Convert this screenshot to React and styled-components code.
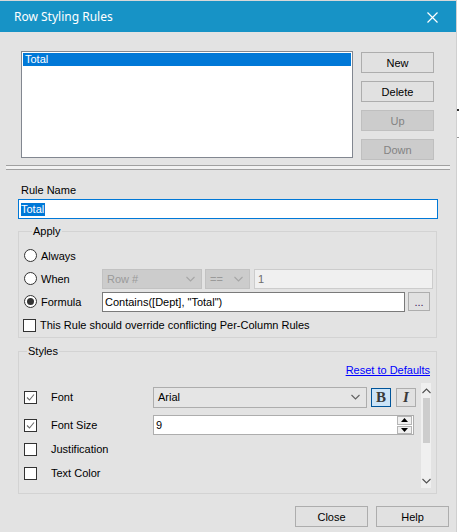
import styled, { createGlobalStyle } from "styled-components";

const GlobalStyle = createGlobalStyle`
  html, body {
    margin: 0;
    padding: 0;
    background: #ffffff;
  }
  body {
    font-family: "Liberation Sans", Arial, sans-serif;
    font-size: 11px;
    color: #000;
  }
`;

const Chevron = ({ color = "#7a7a7a", up = false }) => (
  <svg width="9" height="6" viewBox="0 0 9 6">
    <polyline
      points={up ? "0.5,5 4.5,1 8.5,5" : "0.5,1 4.5,5 8.5,1"}
      fill="none"
      stroke={color}
      strokeWidth="1.1"
    />
  </svg>
);

const CheckBox = ({ checked }) => (
  <Box>
    {checked && (
      <svg width="11" height="11" viewBox="0 0 11 11">
        <polyline points="2,5.5 4.5,8 9,2.5" fill="none" stroke="#6b6b6b" strokeWidth="1.1" />
      </svg>
    )}
  </Box>
);

const App = () => {
  return (
    <>
      <GlobalStyle />
      <Screen>
        <Dialog>
          <TitleBar>
            <Title>Row Styling Rules</Title>
            <CloseX>
              <svg width="11" height="11" viewBox="0 0 11 11">
                <path d="M0.5 0.5 L10.5 10.5 M10.5 0.5 L0.5 10.5" stroke="#fff" strokeWidth="1.2" />
              </svg>
            </CloseX>
          </TitleBar>

          <Body>
            <TopSection>
              <ListBox>
                <ListItem>Total</ListItem>
              </ListBox>
              <ButtonColumn>
                <Button>New</Button>
                <Button>Delete</Button>
                <Button disabled>Up</Button>
                <Button disabled>Down</Button>
              </ButtonColumn>
            </TopSection>

            <Separator />

            <Form>
              <FieldLabel>Rule Name</FieldLabel>
              <NameBox>
                <Highlight>Total</Highlight>
              </NameBox>

              <Group>
                <Legend>Apply</Legend>
                <ApplyRow>
                  <OptionLabel>
                    <Radio />
                    Always
                  </OptionLabel>
                </ApplyRow>
                <ApplyRow>
                  <OptionLabel>
                    <Radio />
                    When
                  </OptionLabel>
                  <Combo width={100} disabled>
                    Row #
                    <Chevron color="#a6a6a6" />
                  </Combo>
                  <Combo width={45} disabled>
                    ==
                    <Chevron color="#a6a6a6" />
                  </Combo>
                  <ValueBox>1</ValueBox>
                </ApplyRow>
                <ApplyRow>
                  <OptionLabel>
                    <Radio checked />
                    Formula
                  </OptionLabel>
                  <FormulaBox>Contains([Dept], "Total")</FormulaBox>
                  <DotsButton>...</DotsButton>
                </ApplyRow>
                <OverrideRow>
                  <CheckBox />
                  This Rule should override conflicting Per-Column Rules
                </OverrideRow>
              </Group>

              <StylesGroup>
                <Legend>Styles</Legend>
                <ResetRow>
                  <ResetLink>Reset to Defaults</ResetLink>
                </ResetRow>
                <ScrollPanel>
                  <StyleRows>
                    <StyleRow first>
                      <CheckBox checked />
                      <StyleName>Font</StyleName>
                      <Combo width={214} height={21}>
                        Arial
                        <Chevron color="#606060" />
                      </Combo>
                      <ToggleButton active>B</ToggleButton>
                      <ToggleButton italic>I</ToggleButton>
                    </StyleRow>
                    <StyleRow>
                      <CheckBox checked />
                      <StyleName>Font Size</StyleName>
                      <SizeBox>
                        9
                        <Spinner>
                          <SpinHalf>
                            <svg width="7" height="4" viewBox="0 0 7 4">
                              <polygon points="0,4 3.5,0 7,4" fill="#000" />
                            </svg>
                          </SpinHalf>
                          <SpinHalf>
                            <svg width="7" height="4" viewBox="0 0 7 4">
                              <polygon points="0,0 3.5,4 7,0" fill="#000" />
                            </svg>
                          </SpinHalf>
                        </Spinner>
                      </SizeBox>
                    </StyleRow>
                    <StyleRow>
                      <CheckBox />
                      <StyleName>Justification</StyleName>
                    </StyleRow>
                    <StyleRow>
                      <CheckBox />
                      <StyleName>Text Color</StyleName>
                    </StyleRow>
                  </StyleRows>
                  <ScrollBar>
                    <ScrollArrow>
                      <Chevron color="#505050" up />
                    </ScrollArrow>
                    <Track>
                      <Thumb />
                    </Track>
                    <ScrollArrow>
                      <Chevron color="#505050" />
                    </ScrollArrow>
                  </ScrollBar>
                </ScrollPanel>
              </StylesGroup>
            </Form>

            <Footer>
              <Button>Close</Button>
              <Button>Help</Button>
            </Footer>
          </Body>
        </Dialog>
        <Strip>
          <Tick />
          <StripLine />
        </Strip>
      </Screen>
    </>
  );
};

export default App;

const Screen = styled.div`
  display: flex;
  width: 459px;
  height: 532px;
  overflow: hidden;
`;

const Dialog = styled.div`
  width: 456px;
  height: 532px;
  background: #e3e3e3;
  display: flex;
  flex-direction: column;
  border-top: 1px solid #d8d8d8;
  box-sizing: border-box;
`;

const Strip = styled.div`
  width: 3px;
  background: #ffffff;
  border-left: 1px solid #d0d0d0;
  box-sizing: border-box;
  display: flex;
  flex-direction: column;
  padding-top: 109px;
`;

const Tick = styled.div`
  width: 2px;
  height: 2px;
  background: #333;
`;

const StripLine = styled.div`
  margin-top: 26px;
  height: 1px;
  background: #9a9a9a;
`;

const TitleBar = styled.div`
  height: 31px;
  background: #1793c6;
  display: flex;
  align-items: center;
  justify-content: space-between;
  padding: 0 18px 0 14px;
  flex-shrink: 0;
`;

const Title = styled.div`
  font-family: "Noto Sans", "Open Sans", sans-serif;
  font-size: 12px;
  color: #ffffff;
  margin-top: -1px;
`;

const CloseX = styled.div`
  display: flex;
  margin-top: 1px;
`;

const Body = styled.div`
  display: flex;
  flex-direction: column;
`;

const TopSection = styled.div`
  display: flex;
  padding: 19px 0 0 21px;
  height: 109px;
`;

const ListBox = styled.div`
  width: 332px;
  height: 107px;
  box-sizing: border-box;
  background: #ffffff;
  border: 1px solid #828790;
  padding: 1px;
`;

const ListItem = styled.div`
  height: 13px;
  line-height: 13px;
  background: #0078d7;
  color: #ffffff;
  padding-left: 2px;
`;

const ButtonColumn = styled.div`
  display: flex;
  flex-direction: column;
  gap: 8px;
  margin: 1px 0 0 8px;
`;

const Button = styled.div`
  width: 73px;
  height: 21px;
  box-sizing: border-box;
  display: flex;
  align-items: center;
  justify-content: center;
  background: ${(props) => (props.disabled ? "#cccccc" : "#e1e1e1")};
  border: 1px solid ${(props) => (props.disabled ? "#bfbfbf" : "#adadad")};
  color: ${(props) => (props.disabled ? "#838383" : "#000000")};
`;

const Separator = styled.div`
  margin: 5px 6px 0 6px;
  height: 3px;
  border-top: 1px solid #a0a0a0;
  border-bottom: 1px solid #a0a0a0;
  background: #f2f2f2;
`;

const Form = styled.div`
  display: flex;
  flex-direction: column;
  padding-left: 18px;
  width: 420px;
`;

const FieldLabel = styled.div`
  margin: 14px 0 0 3px;
  height: 15px;
  line-height: 13px;
`;

const NameBox = styled.div`
  height: 20px;
  box-sizing: border-box;
  border: 1px solid #0078d7;
  background: #ffffff;
  display: flex;
  align-items: center;
  padding-left: 2px;
`;

const Highlight = styled.span`
  background: #0078d7;
  color: #ffffff;
  line-height: 13px;
  padding-right: 1px;
`;

const Group = styled.fieldset`
  margin: 6px 0 0 0;
  width: 419px;
  box-sizing: border-box;
  border: 1px solid #d3d3d3;
  padding: 6px 0 0 5px;
  min-width: 0;
`;

const StylesGroup = styled(Group)`
  margin-top: 7px;
  padding: 0 0 5px 0;
`;

const Legend = styled.legend`
  margin-left: 8px;
  padding: 0 1px;
  line-height: 13px;
  font-size: 11px;
`;

const ApplyRow = styled.div`
  height: 23px;
  display: flex;
  align-items: center;
`;

const OptionLabel = styled.div`
  width: 78px;
  display: flex;
  align-items: center;
  gap: 4px;
`;

const Radio = styled.div`
  width: 13px;
  height: 13px;
  box-sizing: border-box;
  border: 1px solid #333333;
  border-radius: 50%;
  background: #ffffff;
  display: flex;
  align-items: center;
  justify-content: center;

  &::after {
    content: "";
    display: ${(props) => (props.checked ? "block" : "none")};
    width: 7px;
    height: 7px;
    border-radius: 50%;
    background: #333333;
  }
`;

const Combo = styled.div`
  width: ${(props) => props.width}px;
  height: ${(props) => props.height || 20}px;
  box-sizing: border-box;
  margin-right: ${(props) => (props.width === 214 ? 4 : 3)}px;
  display: flex;
  align-items: center;
  justify-content: space-between;
  padding: 0 6px 0 4px;
  background: ${(props) => (props.disabled ? "#cccccc" : "#e5e5e5")};
  border: 1px solid ${(props) => (props.disabled ? "#c2c2c2" : "#adadad")};
  color: ${(props) => (props.disabled ? "#9a9a9a" : "#000000")};
`;

const ValueBox = styled.div`
  width: 179px;
  height: 20px;
  box-sizing: border-box;
  margin-left: 1px;
  display: flex;
  align-items: center;
  padding-left: 3px;
  background: #f0f0f0;
  border: 1px solid #cccccc;
  color: #6d6d6d;
`;

const FormulaBox = styled.div`
  width: 303px;
  height: 20px;
  box-sizing: border-box;
  display: flex;
  align-items: center;
  padding-left: 2px;
  background: #ffffff;
  border: 1px solid #7a7a7a;
`;

const DotsButton = styled.div`
  width: 22px;
  height: 19px;
  box-sizing: border-box;
  margin-left: 3px;
  display: flex;
  align-items: flex-end;
  justify-content: center;
  padding-bottom: 4px;
  background: #e1e1e1;
  border: 1px solid #adadad;
  color: #3a1a5a;
  line-height: 8px;
`;

const OverrideRow = styled.div`
  height: 24px;
  display: flex;
  align-items: center;
  gap: 4px;
  margin-left: -1px;
`;

const Box = styled.div`
  width: 13px;
  height: 13px;
  box-sizing: border-box;
  border: 1px solid #333333;
  background: ${"#ffffff"};
  display: flex;
  align-items: center;
  justify-content: center;
  flex-shrink: 0;
`;

const ResetRow = styled.div`
  height: 25px;
  display: flex;
  align-items: center;
  justify-content: flex-end;
  padding-right: 6px;
`;

const ResetLink = styled.span`
  color: #0000ff;
  text-decoration: underline;
  line-height: 13px;
`;

const ScrollPanel = styled.div`
  height: 105px;
  display: flex;
  margin-right: 5px;
`;

const StyleRows = styled.div`
  flex: 1;
  display: flex;
  flex-direction: column;
  padding: 2px 0 0 5px;
`;

const StyleRow = styled.div`
  height: 24px;
  display: flex;
  align-items: center;
  margin-bottom: ${(props) => (props.first ? 4 : 0)}px;
`;

const StyleName = styled.div`
  width: 102px;
  margin-left: 14px;
`;

const ToggleButton = styled.div`
  width: 20px;
  height: 19px;
  box-sizing: border-box;
  margin-right: 5px;
  display: flex;
  align-items: center;
  justify-content: center;
  font-family: "Liberation Serif", "Times New Roman", serif;
  font-size: 15px;
  font-weight: bold;
  font-style: ${(props) => (props.italic ? "italic" : "normal")};
  color: #3a3a3a;
  background: ${(props) => (props.active ? "#cce4f7" : "#e1e1e1")};
  border: 1px solid ${(props) => (props.active ? "#005499" : "#adadad")};
`;

const SizeBox = styled.div`
  width: 261px;
  height: 20px;
  box-sizing: border-box;
  display: flex;
  align-items: center;
  justify-content: space-between;
  padding-left: 2px;
  background: #ffffff;
  border: 1px solid #adadad;
`;

const Spinner = styled.div`
  width: 15px;
  height: 18px;
  display: flex;
  flex-direction: column;
  margin-right: 1px;
  gap: 1px;
`;

const SpinHalf = styled.div`
  flex: 1;
  display: flex;
  align-items: center;
  justify-content: center;
  background: #f0f0f0;
  border: 1px solid #b5b5b5;
  box-sizing: border-box;
`;

const ScrollBar = styled.div`
  width: 17px;
  display: flex;
  flex-direction: column;
  background: #f0f0f0;
`;

const ScrollArrow = styled.div`
  height: 15px;
  display: flex;
  align-items: center;
  justify-content: center;
`;

const Track = styled.div`
  flex: 1;
  display: flex;
  flex-direction: column;
  padding: 0 1px 0 2px;
`;

const Thumb = styled.div`
  height: 45px;
  background: #cdcdcd;
`;

const Footer = styled.div`
  display: flex;
  justify-content: flex-end;
  gap: 8px;
  padding: 12px 7px 0 0;
`;
